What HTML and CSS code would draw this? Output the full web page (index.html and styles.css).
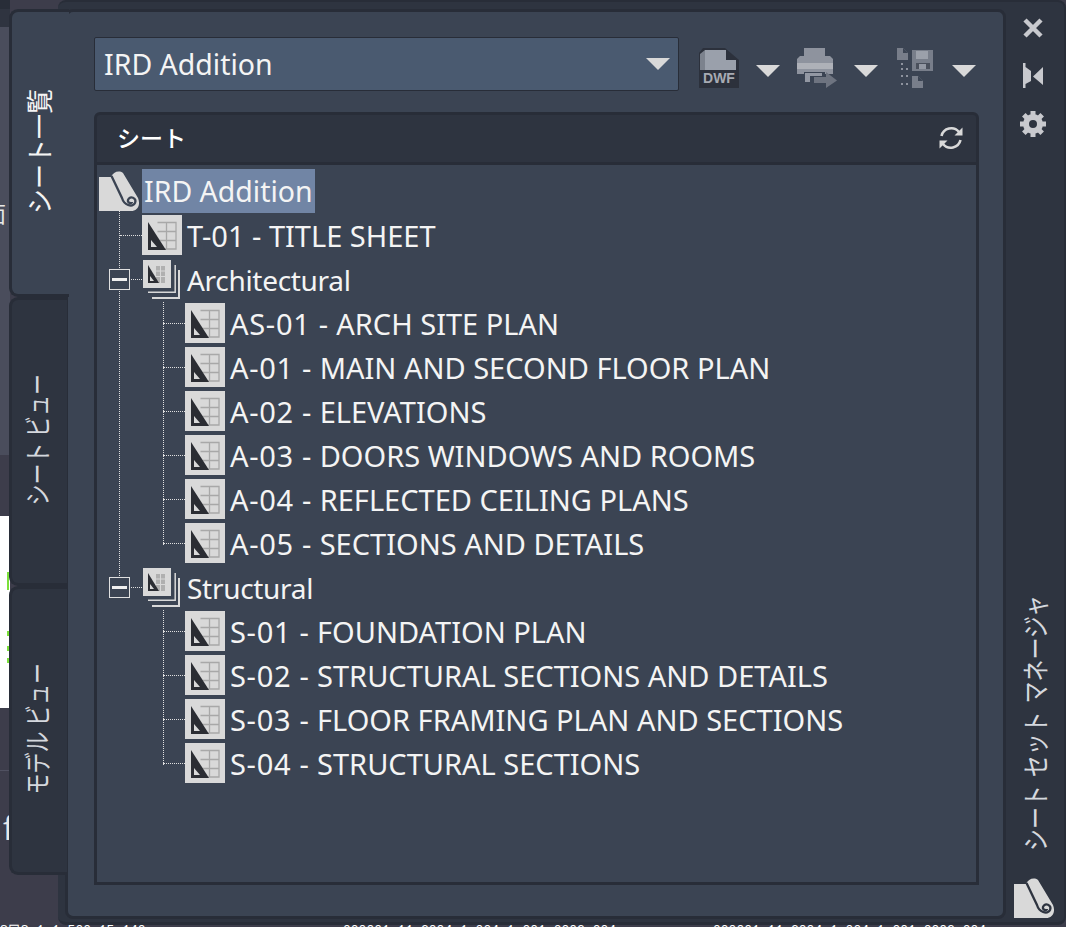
FILE: index.html
```html
<!DOCTYPE html>
<html lang="ja">
<head>
<meta charset="utf-8">
<title>シート セット マネージャ</title>
<link rel="stylesheet" href="styles.css">
</head>
<body>
<svg class="defs" width="0" height="0" aria-hidden="true">
  <defs>
    <symbol id="sheet" viewBox="0 0 40 40">
      <rect width="40" height="40" fill="#d9d9d9"/>
      <path d="M15.5 7.500H34V34H15.500M24.500 7.500V34M15.500 16.500H34M15.500 25.500H34" fill="none" stroke="#a8a8a8" stroke-width="1.300"/>
      <path d="M6 7L24 35H6Z" fill="#2b2d33"/>
      <path d="M9 25L15 32H9Z" fill="#d9d9d9"/>
    </symbol>
    <symbol id="group" viewBox="0 0 40 40">
      <path d="M6 33.200H33.200V6" fill="none" stroke="#d9d9d9" stroke-width="1.500"/>
      <path d="M10 39H37V11" fill="none" stroke="#d9d9d9" stroke-width="2"/>
      <rect x="1" y="1" width="28" height="28" fill="#d9d9d9"/>
      <path d="M14 7H23V24H14Z" fill="#b0b0b0"/>
      <path d="M14 12H23M14 17.500H23M18.500 7V24" stroke="#d9d9d9" stroke-width="1"/>
      <path d="M6 6L17 24H6Z" fill="#2b2d33"/>
      <path d="M8 17L12 22H8Z" fill="#d9d9d9"/>
    </symbol>
    <symbol id="roll" viewBox="0 0 40 40">
      <path d="M0 6H12C14 1 20-1 24 2L39 27C42 35 38 40 32 40H0Z" fill="#d9d9d9"/>
      <path class="roll-line" d="M12.500 5L23 27C25 34 33 37 36 32C38 27 31 24 29 29C28 32 33 33 33 31" fill="none" stroke-width="2.300"/>
    </symbol>
  </defs>
</svg>

<div class="backdrop">
  <div class="bd bd-top"></div>
  <div class="bd bd-head"></div>
  <div class="bd bd-light"><span class="frag frag-a">面</span></div>
  <div class="bd bd-dark"></div>
  <div class="bd bd-white"><i class="dot d1"></i><i class="dot d2"></i><i class="dot d3"></i><i class="dot d4"></i></div>
  <div class="bd bd-low"><i class="bd-line"></i><span class="frag frag-b">f</span></div>
</div>
<div class="ground-text"><span class="gt-a">S口S 1:1 500 15 140</span><span class="gt-b">000001-11-2004 1 004 1 001 0002 004</span><span class="gt-c">000001-11-2004 1 004 1 001 0002 004</span></div>

<div class="desktop">
  <nav class="tabs">
    <div class="tab tab-active"><span class="vtext vtext-big">シート一覧</span></div>
    <div class="tab"><span class="vtext">シート ビュー</span></div>
    <div class="tab"><span class="vtext">モデル ビュー</span></div>
  </nav>

  <div class="shell">
    <main class="main">
      <div class="toolbar">
        <div class="combo"><span>IRD Addition</span><i class="arrow"></i></div>
        <div class="tools">
          <svg class="tool" viewBox="0 0 40 40">
            <path d="M4 0H26L40 12V40H0V5Z" fill="#2c313c"/>
            <path d="M6 2H27V12H37V22H6Z" fill="#9aa0ab"/>
            <path d="M6 2L1 6V22H6Z" fill="#7c828d"/>
            <text x="20" y="35" class="dwf">DWF</text>
          </svg>
          <i class="arrow arrow-tool"></i>
          <svg class="tool" viewBox="0 0 40 40">
            <rect x="7" y="0" width="21" height="8" fill="#8e939e"/>
            <path d="M3 8H33L36 11V26H0V11Z" fill="#8e939e"/>
            <rect x="0" y="15" width="36" height="6" fill="#aeb1b8"/>
            <rect x="7" y="24" width="21" height="10" fill="#3b4453"/>
            <path d="M8 25H25V28H13V34H8Z" fill="#9398a3"/>
            <path d="M17 29H29V24L40 32.500L29 40V35H17Z" fill="#6e7480"/>
          </svg>
          <i class="arrow arrow-tool"></i>
          <svg class="tool" viewBox="0 0 40 40">
            <path d="M2 0H8L13 5V12H2Z" fill="#787e8a"/>
            <path d="M8 0L13 5H8Z" fill="#3b4453"/>
            <path d="M17 2H38V23H17Z" fill="#787e8a"/>
            <rect x="21" y="3" width="12" height="8" fill="#9ba0aa"/>
            <rect x="21" y="15" width="14" height="6" fill="#4a505c"/>
            <rect x="24" y="16" width="7" height="5" fill="#9398a3"/>
            <path d="M6 20h2v2H6zM11 20h2v2H11zM6 27h2v2H6zM11 27h2v2H11zM6 35h2v2H6zM11 35h2v2H11zM6 15h2v2H6z" fill="#8e939e"/>
            <path d="M17 28H23L28 33V40H17Z" fill="#787e8a"/>
            <path d="M23 28L28 33H23Z" fill="#3b4453"/>
          </svg>
          <i class="arrow arrow-tool"></i>
        </div>
      </div>

      <header class="sheet-head">
        <h1 class="sheet-title">シート</h1>
        <svg class="sync" viewBox="0 0 26 24">
          <path d="M3.500 10A10 10 0 0 1 21 6M22.500 14A10 10 0 0 1 5 18" fill="none" stroke="#d9d9d9" stroke-width="2.600"/>
          <path d="M24.500 1.500V9.500H16.500ZM1.500 22.500V14.500H9.500Z" fill="#d9d9d9"/>
        </svg>
      </header>

      <section class="tree">
        <div class="row row-root">
          <svg class="ic-root"><use href="#roll"/></svg>
          <span class="label label-title label-selected">IRD Addition</span>
        </div>
        <div class="kids kids-1">
          <div class="row row-1">
            <svg class="ic"><use href="#sheet"/></svg><span class="label">T-01 - TITLE SHEET</span>
          </div>
          <div class="row row-1">
            <i class="toggle"></i>
            <svg class="ic"><use href="#group"/></svg><span class="label label-mixed">Architectural</span>
          </div>
          <div class="kids kids-2">
            <div class="row row-2"><svg class="ic"><use href="#sheet"/></svg><span class="label"><span class="num">AS-01 -</span> ARCH SITE PLAN</span></div>
            <div class="row row-2"><svg class="ic"><use href="#sheet"/></svg><span class="label"><span class="num">A-01 -</span> MAIN AND SECOND FLOOR PLAN</span></div>
            <div class="row row-2"><svg class="ic"><use href="#sheet"/></svg><span class="label"><span class="num">A-02 -</span> ELEVATIONS</span></div>
            <div class="row row-2"><svg class="ic"><use href="#sheet"/></svg><span class="label"><span class="num">A-03 -</span> DOORS WINDOWS AND ROOMS</span></div>
            <div class="row row-2"><svg class="ic"><use href="#sheet"/></svg><span class="label"><span class="num">A-04 -</span> REFLECTED CEILING PLANS</span></div>
            <div class="row row-2"><svg class="ic"><use href="#sheet"/></svg><span class="label"><span class="num">A-05 -</span> SECTIONS AND DETAILS</span></div>
          </div>
          <div class="row row-1">
            <i class="toggle"></i>
            <svg class="ic"><use href="#group"/></svg><span class="label label-mixed">Structural</span>
          </div>
          <div class="kids kids-2">
            <div class="row row-2"><svg class="ic"><use href="#sheet"/></svg><span class="label"><span class="num">S-01 -</span> FOUNDATION PLAN</span></div>
            <div class="row row-2"><svg class="ic"><use href="#sheet"/></svg><span class="label"><span class="num">S-02 -</span> STRUCTURAL SECTIONS AND DETAILS</span></div>
            <div class="row row-2"><svg class="ic"><use href="#sheet"/></svg><span class="label"><span class="num">S-03 -</span> FLOOR FRAMING PLAN AND SECTIONS</span></div>
            <div class="row row-2"><svg class="ic"><use href="#sheet"/></svg><span class="label"><span class="num">S-04 -</span> STRUCTURAL SECTIONS</span></div>
          </div>
        </div>
      </section>
    </main>

    <aside class="side">
      <div class="side-icons">
        <svg class="side-ic" viewBox="0 0 26 26"><path d="M5 5L21 21M21 5L5 21" stroke="#c8c9ce" stroke-width="4.500" fill="none"/></svg>
        <svg class="side-ic" viewBox="0 0 26 26"><path d="M3 0H5.500V4L11 8V18L5.500 21V25H3ZM23 4V22L13 13.500Z" fill="#c8c9ce"/></svg>
        <svg class="side-ic" viewBox="0 0 26 26">
          <circle cx="13" cy="13" r="7" fill="none" stroke="#c8c9ce" stroke-width="6"/>
          <path d="M13 0V26M0 13H26M3.800 3.800L22.200 22.200M22.200 3.800L3.800 22.200" stroke="#c8c9ce" stroke-width="5" stroke-dasharray="6 14 6" fill="none"/>
        </svg>
      </div>
      <div class="side-foot">
        <span class="vtext vtext-long">シート セット マネージャ</span>
        <svg class="ic-logo"><use href="#roll"/></svg>
      </div>
    </aside>
  </div>
</div>
</body>
</html>
```
FILE: styles.css
```css
* { box-sizing: border-box; }

html, body {
  margin: 0;
  height: 100%;
}

body {
  position: relative;
  width: 1066px;
  height: 927px;
  overflow: hidden;
  background: #3d3d4b;
  font-family: "Noto Sans", "Noto Sans CJK JP", sans-serif;
  color: #f4f4f4;
}

.defs { position: absolute; }

.roll-line { stroke: var(--roll-line, #3b4453); }

/* What lies behind the floating palette */
.backdrop {
  position: absolute;
  left: 0;
  top: 0;
  width: 10px;
  height: 927px;
  display: flex;
  flex-direction: column;
  overflow: hidden;
}
.bd { position: relative; flex: none; overflow: hidden; }
.bd-top { height: 9px; background: #282d38; }
.bd-head { height: 18px; background: #2f3440; }
.bd-light { height: 428px; background: #4a4d5c; }
.bd-dark { height: 61px; background: #3d3d4b; }
.bd-white { height: 192px; background: #fff; }
.bd-low { flex: 1; background: #3d3d4b; }

.bd-line {
  position: absolute;
  left: 0;
  top: 62px;
  width: 10px;
  height: 1px;
  background: #505161;
}

.frag {
  position: absolute;
  color: #e8e8e8;
  font-size: 22px;
  line-height: 1;
}
.frag-a { left: -16px; top: 175px; }
.frag-b { left: 3px; top: 104px; font-size: 32px; }

.dot {
  position: absolute;
  left: 7px;
  width: 2px;
  height: 5px;
  background: #7be03a;
}
.d1 { top: 56px; height: 18px; }
.d2 { top: 115px; }
.d3 { top: 130px; }
.d4 { top: 142px; }

.ground-text {
  position: absolute;
  left: 0;
  top: 924px;
  width: 1066px;
  height: 3px;
  overflow: hidden;
  display: flex;
  font-family: "Liberation Mono", monospace;
  font-size: 13px;
  line-height: 14px;
  color: #fff;
  white-space: nowrap;
}
.gt-a { width: 343px; }
.gt-b { width: 340px; }
.gt-c { margin-left: 30px; }

/* Palette */
.desktop {
  position: relative;
  display: flex;
  height: 925px;
  padding-left: 9px;
}

.tabs {
  position: relative;
  z-index: 2;
  flex: none;
  width: 49px;
  padding-top: 9px;
  display: flex;
  flex-direction: column;
}

.tab {
  flex: none;
  width: 58px;
  height: 289px;
  padding: 0 4px 3px 0;
  display: flex;
  align-items: center;
  justify-content: center;
  background: #2e3440;
  border: 3px solid #282d38;
  border-right: 0;
  border-radius: 9px 0 0 9px;
  color: #d5d8de;
}

.tab-active {
  width: 60px;
  height: 288px;
  background: #3b4453;
  color: #f4f4f4;
}

.vtext {
  writing-mode: vertical-rl;
  text-orientation: sideways;
  transform: rotate(180deg) scaleX(1.3);
  font-size: 21px;
  line-height: 26px;
  white-space: pre;
}
.vtext-big {
  font-size: 25px;
  transform: rotate(180deg) scaleX(1.1);
}
.vtext-long {
  font-size: 22px;
  word-spacing: 2px;
  transform: rotate(180deg) scaleX(1.25);
}

.shell {
  flex: 1;
  display: flex;
  min-width: 0;
  padding: 7px 0 3px 7px;
  background: #2e3440;
  border: 2px solid #282d38;
  border-width: 2px 2px 3px 0;
  border-radius: 8px;
}

.main {
  flex: none;
  width: 941px;
  height: 910px;
  padding: 25px 24px 31px 26px;
  background: #3b4453;
  border: 3px solid #282d38;
  border-radius: 8px;
  display: flex;
  flex-direction: column;
}

.toolbar {
  flex: none;
  display: flex;
  height: 54px;
  margin-bottom: 21px;
}

.combo {
  flex: none;
  width: 585px;
  height: 54px;
  padding: 0 8px 0 9px;
  display: flex;
  align-items: center;
  justify-content: space-between;
  background: #4a5a70;
  border: 1px solid #282d38;
  border-radius: 2px;
  font-size: 28.500px;
}

.arrow {
  flex: none;
  width: 0;
  height: 0;
  border-left: 12px solid transparent;
  border-right: 12px solid transparent;
  border-top: 12px solid #d9d9d9;
}

.tools {
  display: flex;
  align-items: flex-start;
  gap: 17px;
  margin-left: 20px;
  padding-top: 11px;
}
.tool { flex: none; width: 40px; height: 40px; }
.arrow-tool { margin-top: 17px; }

.dwf {
  font-family: "Liberation Sans", sans-serif;
  font-size: 14px;
  font-weight: 700;
  fill: #a7abb3;
  text-anchor: middle;
}

.sheet-head {
  flex: none;
  height: 53px;
  display: flex;
  align-items: center;
  justify-content: space-between;
  padding: 0 12px 2px 20px;
  background: #2e3440;
  border: 3px solid #282d38;
  border-radius: 6px 6px 0 0;
}
.sheet-title {
  margin: 0 0 2px;
  font-size: 23px;
  font-weight: 500;
  color: #fff;
}
.sync { width: 26px; height: 24px; }

.tree {
  flex: 1;
  padding-top: 5px;
  border: 3px solid #282d38;
  border-top: 0;
  font-size: 29px;
}

.row {
  position: relative;
  display: flex;
  align-items: center;
  height: 44px;
  white-space: nowrap;
}
.row-root { padding-left: 2px; margin: -1px 0 1px; }
.row-1 { padding-left: 45px; }
.row-2 { padding-left: 88px; }

.ic-root { flex: none; width: 40px; height: 40px; margin-right: 3px; }
.ic { flex: none; width: 40px; height: 40px; margin-right: 5px; margin-top: -2px; }
.ic-logo { flex: none; width: 40px; height: 40px; margin-left: 8px; margin-top: 27px; }

.label { display: block; line-height: 44px; }
.label-title { font-size: 28.500px; }
.label-mixed { font-size: 28px; letter-spacing: -0.3px; }
.label-selected {
  padding: 0 2px;
  background: #7185a5;
}
.num { letter-spacing: 0.7px; }

.kids { position: relative; }
.kids::before {
  content: "";
  position: absolute;
  border-left: 1px dotted #e0e0e0;
}
.kids-1::before { left: 22px; top: -3px; bottom: 196px; }
.kids-2::before { left: 66px; top: 0; bottom: 21px; }

.row-1::before,
.row-2::before {
  content: "";
  position: absolute;
  top: 21px;
  border-top: 1px dotted #e0e0e0;
}
.row-1::before { left: 23px; width: 22px; }
.row-2::before { left: 66px; width: 22px; }

.toggle {
  position: absolute;
  z-index: 1;
  left: 12px;
  top: 11px;
  width: 21px;
  height: 21px;
  background: #3b4453;
  border: 1px solid #e0e0e0;
}
.toggle::before {
  content: "";
  position: absolute;
  left: 2px;
  top: 8px;
  width: 15px;
  height: 3px;
  background: #efefef;
}

.side {
  --roll-line: #2e3440;
  flex: 1;
  min-width: 0;
  display: flex;
  flex-direction: column;
  justify-content: space-between;
  padding: 6px 0 1px;
}
.side-icons {
  display: flex;
  flex-direction: column;
  align-items: center;
  gap: 22px;
  margin-right: 4px;
}
.side-ic { width: 26px; height: 26px; }
.side-foot {
  display: flex;
  flex-direction: column;
  align-items: center;
}
.side-foot .vtext { color: #d5d8de; }
.side-foot .ic-logo { align-self: flex-start; }
```
